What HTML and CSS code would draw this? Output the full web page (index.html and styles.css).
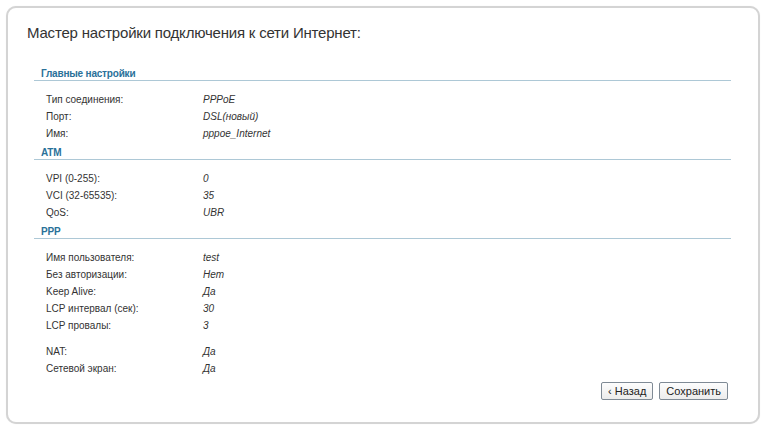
FILE: index.html
```html
<!DOCTYPE html>
<html lang="ru">
<head>
    <meta charset="UTF-8">
    <meta name="viewport" content="width=device-width, initial-scale=1.0">
    <title>Мастер настройки</title>
    <link rel="stylesheet" href="styles.css">
</head>
<body>
    <div class="wizard">
        <h2 class="wizard-title">Мастер настройки подключения к сети Интернет:</h2>

        <!-- Main settings -->
        <div class="section">
            <div class="section-header">Главные настройки</div>
            <div class="rows">
                <div class="row"><span class="label">Тип соединения:</span><span class="value">PPPoE</span></div>
                <div class="row"><span class="label">Порт:</span><span class="value">DSL(новый)</span></div>
                <div class="row"><span class="label">Имя:</span><span class="value">pppoe_Internet</span></div>
            </div>
        </div>

        <!-- ATM -->
        <div class="section">
            <div class="section-header">ATM</div>
            <div class="rows">
                <div class="row"><span class="label">VPI (0-255):</span><span class="value">0</span></div>
                <div class="row"><span class="label">VCI (32-65535):</span><span class="value">35</span></div>
                <div class="row"><span class="label">QoS:</span><span class="value">UBR</span></div>
            </div>
        </div>

        <!-- PPP -->
        <div class="section">
            <div class="section-header">PPP</div>
            <div class="rows">
                <div class="row"><span class="label">Имя пользователя:</span><span class="value">test</span></div>
                <div class="row"><span class="label">Без авторизации:</span><span class="value">Нет</span></div>
                <div class="row"><span class="label">Keep Alive:</span><span class="value">Да</span></div>
                <div class="row"><span class="label">LCP интервал (сек):</span><span class="value">30</span></div>
                <div class="row"><span class="label">LCP провалы:</span><span class="value">3</span></div>
            </div>
            <div class="rows rows-extra">
                <div class="row"><span class="label">NAT:</span><span class="value">Да</span></div>
                <div class="row"><span class="label">Сетевой экран:</span><span class="value">Да</span></div>
            </div>
        </div>

        <div class="buttons">
            <button class="btn">&lsaquo; Назад</button>
            <button class="btn">Сохранить</button>
        </div>
    </div>
</body>
</html>
```

FILE: styles.css
```css
/* General Styles */
body {
    font-family: "Liberation Sans", Tahoma, sans-serif;
    font-size: 10px;
    margin: 0;
    padding: 0;
    background-color: #fff;
    color: #333;
}

.wizard {
    margin: 6px 7px 4px 6px;
    height: 414px;
    border: 2px solid #d4d4d4;
    border-radius: 10px;
    box-shadow: 0 0 1px #e4e4e4;
    background: #fff;
}

.wizard-title {
    margin: 15px 0 0 19px;
    font-family: "Liberation Sans", Tahoma, sans-serif;
    font-size: 15px;
    font-weight: normal;
    letter-spacing: -0.2px;
    line-height: 20px;
    color: #333;
}

/* Sections */
.section {
    margin: 0 27px 0 26px;
}

.section:first-of-type {
    margin-top: 21px;
}

.section-header {
    height: 16px;
    line-height: 19px;
    padding-left: 7px;
    border-bottom: 1px solid #adc8d6;
    font-weight: bold;
    letter-spacing: -0.2px;
    color: #2a7199;
}

.rows {
    padding: 11px 0 0 12px;
}

.rows-extra {
    padding-top: 9px;
}

.row {
    display: flex;
    height: 17px;
    line-height: 16px;
}

.label {
    width: 157px;
}

.value {
    font-style: italic;
}

/* Buttons */
.buttons {
    display: flex;
    justify-content: flex-end;
    gap: 6px;
    margin: 4px 30px 0 0;
}

.btn {
    height: 18px;
    padding: 0 6px;
    font-family: "Liberation Sans", Tahoma, sans-serif;
    font-size: 11px;
    color: #222;
    background: linear-gradient(#fdfdfd, #ececec);
    border: 1px solid #7f8a95;
    border-radius: 2px;
    cursor: pointer;
}
```
